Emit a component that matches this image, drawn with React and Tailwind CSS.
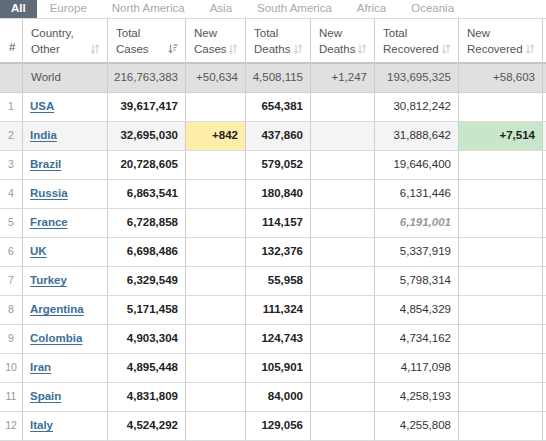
const TABS = ['All', 'Europe', 'North America', 'Asia', 'South America', 'Africa', 'Oceania']

const COLS = [
  { key: 'num', label: ['#'], sort: null },
  { key: 'country', label: ['Country,', 'Other'], sort: 'none' },
  { key: 'cases', label: ['Total', 'Cases'], sort: 'desc' },
  { key: 'newCases', label: ['New', 'Cases'], sort: 'none' },
  { key: 'deaths', label: ['Total', 'Deaths'], sort: 'none' },
  { key: 'newDeaths', label: ['New', 'Deaths'], sort: 'none' },
  { key: 'recovered', label: ['Total', 'Recovered'], sort: 'none' },
  { key: 'newRecovered', label: ['New', 'Recovered'], sort: 'none' },
]

const ROWS = [
  ['1', 'USA', '39,617,417', '', '654,381', '', '30,812,242', ''],
  ['2', 'India', '32,695,030', '+842', '437,860', '', '31,888,642', '+7,514'],
  ['3', 'Brazil', '20,728,605', '', '579,052', '', '19,646,400', ''],
  ['4', 'Russia', '6,863,541', '', '180,840', '', '6,131,446', ''],
  ['5', 'France', '6,728,858', '', '114,157', '', '6,191,001', ''],
  ['6', 'UK', '6,698,486', '', '132,376', '', '5,337,919', ''],
  ['7', 'Turkey', '6,329,549', '', '55,958', '', '5,798,314', ''],
  ['8', 'Argentina', '5,171,458', '', '111,324', '', '4,854,329', ''],
  ['9', 'Colombia', '4,903,304', '', '124,743', '', '4,734,162', ''],
  ['10', 'Iran', '4,895,448', '', '105,901', '', '4,117,098', ''],
  ['11', 'Spain', '4,831,809', '', '84,000', '', '4,258,193', ''],
  ['12', 'Italy', '4,524,292', '', '129,056', '', '4,255,808', ''],
]

// last column is the next (cut off) column of the table
const GRID = 'grid grid-cols-[23px_85px_78px_60px_65px_64px_84px_84px_90px]'

function SortIcon({ sort }) {
  if (sort === 'desc') {
    return (
      <svg width="10" height="10" viewBox="0 0 10 10" className="shrink-0">
        <path d="M2.5 0.5v8M0.8 6.6l1.7 2.2 1.7-2.2" stroke="#9a9a9a" strokeWidth="1.3" fill="none" />
        <path d="M5.5 1h4M5.5 3.6h3M5.5 6.2h2" stroke="#9a9a9a" strokeWidth="1.3" />
      </svg>
    )
  }
  return (
    <svg width="10" height="10" viewBox="0 0 10 10" className="shrink-0">
      <path d="M3 0.5v8.5M1.3 7l1.7 2 1.7-2" stroke="#d4d4d4" strokeWidth="1.3" fill="none" />
      <path d="M7 9.5V1M5.3 3l1.7-2 1.7 2" stroke="#d4d4d4" strokeWidth="1.3" fill="none" />
    </svg>
  )
}

function NumCell({ v, bold, bg = '', extra = '' }) {
  return (
    <div className={`h-[29px] flex items-center justify-end pr-[7px] border-r border-b border-r-[#cfcfcf] border-b-[#dcdcdc] ${bold ? 'font-bold text-[#222]' : 'text-[#333]'} ${bg} ${extra}`}>{v}</div>
  )
}

export default function App() {
  return (
    <div className="w-[546px] h-[441px] overflow-hidden bg-white text-[11.5px] font-['Liberation_Sans',Arial,sans-serif]">
      <div className="flex h-[18px]">
        {TABS.map((t, i) => (
          <div key={t} className={`flex items-center ${i === 0 ? 'bg-[#5f6b78] text-white font-bold px-[11px]' : 'text-[#a8a8a8] px-[12px] ml-[1px]'}`}>{t}</div>
        ))}
      </div>

      <div className="w-[700px]">
        <div className={GRID}>
          {COLS.map(c => (
            <div key={c.key} className="h-[46px] border-t border-t-[#dcdcdc] border-b-2 border-b-[#c4c4c4] border-r border-r-[#cfcfcf] text-[#555] flex items-center pl-[8px] pr-[7px]">
              {c.sort ? (
                <div className="flex-1 flex items-end justify-between leading-[16px]">
                  <div>
                    <div>{c.label[0]}</div>
                    <div>{c.label[1]}</div>
                  </div>
                  <div className="pb-[3px]"><SortIcon sort={c.sort} /></div>
                </div>
              ) : (
                <div className="pt-[14px] pl-[1px]">{c.label[0]}</div>
              )}
            </div>
          ))}
          <div className="h-[46px] border-t border-t-[#dcdcdc] border-b-2 border-b-[#c4c4c4]" />
        </div>

        <div className={`${GRID} bg-[#e0e0e0] text-[#555]`}>
          <div className="h-[29px] border-r border-b border-r-[#cfcfcf] border-b-[#d0d0d0]" />
          <div className="h-[29px] flex items-center pl-[8px] border-r border-b border-r-[#cfcfcf] border-b-[#d0d0d0]">World</div>
          {['216,763,383', '+50,634', '4,508,115', '+1,247', '193,695,325', '+58,603', ''].map((v, i) => (
            <div key={i} className="h-[29px] flex items-center justify-end pr-[7px] border-r border-b border-r-[#cfcfcf] border-b-[#d0d0d0]">{v}</div>
          ))}
        </div>

        {ROWS.map(r => {
          const india = r[1] === 'India'
          const france = r[1] === 'France'
          return (
            <div key={r[0]} className={`${GRID} ${india ? 'bg-[#f4f4f4]' : 'bg-white'}`}>
              <div className="h-[29px] flex items-center justify-center text-[10.5px] text-[#999] border-r border-b border-r-[#cfcfcf] border-b-[#dcdcdc]">{r[0]}</div>
              <div className="h-[29px] flex items-center pl-[7px] border-r border-b border-r-[#cfcfcf] border-b-[#dcdcdc]">
                <a href="#" className="font-bold text-[#3d6f98] underline underline-offset-2">{r[1]}</a>
              </div>
              <NumCell v={r[2]} bold />
              <NumCell v={r[3]} bold bg={r[3] ? 'bg-[#ffeeaa]' : ''} />
              <NumCell v={r[4]} bold />
              <NumCell v={r[5]} bold />
              <NumCell v={r[6]} extra={france ? 'italic font-bold !text-[#999]' : ''} />
              <NumCell v={r[7]} bold bg={r[7] ? 'bg-[#c8e6c9]' : ''} />
              <NumCell v="" />
            </div>
          )
        })}
      </div>
    </div>
  )
}
